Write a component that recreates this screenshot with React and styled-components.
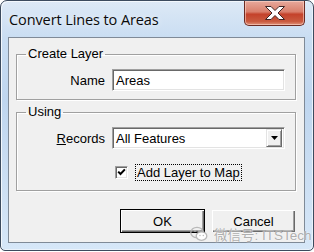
import React from 'react';
import styled, { createGlobalStyle } from 'styled-components';

function App() {
  return (
    <>
      <GlobalStyle />
      <Window>
        <TitleBar>
          <Title>Convert Lines to Areas</Title>
          <CloseButton aria-label='Close'>
            <svg width='22' height='16' viewBox='0 0 22 16'>
              <path
                d='M1.5 1.5h5.5l4 4 4-4h5.5l-6.5 6.5 6.5 6.5h-5.5l-4-4-4 4h-5.5l6.5-6.5z'
                fill='#fff'
                stroke='#3d2424'
                strokeWidth='1'
                strokeLinejoin='round'
              />
            </svg>
          </CloseButton>
        </TitleBar>
        <Client>
          <Group>
            <Legend>Create Layer</Legend>
            <FieldGrid>
              <Label>Name</Label>
              <TextBox>Areas</TextBox>
            </FieldGrid>
          </Group>
          <Group $top={4} $bottom={10}>
            <Legend>Using</Legend>
            <FieldGrid>
              <Label>
                <u>R</u>ecords
              </Label>
              <Combo>
                <ComboText>All Features</ComboText>
                <ComboButton>
                  <svg width='7' height='4' viewBox='0 0 7 4'>
                    <path d='M0 0h7L3.5 4z' fill='#000' />
                  </svg>
                </ComboButton>
              </Combo>
              <span />
              <CheckRow>
                <CheckBox>
                  <svg width='9' height='9' viewBox='0 0 9 9'>
                    <path
                      d='M1.2 3.6L3.5 6l4.4-4.6'
                      fill='none'
                      stroke='#000'
                      strokeWidth='2'
                    />
                  </svg>
                </CheckBox>
                <FocusLabel>Add Layer to Map</FocusLabel>
              </CheckRow>
            </FieldGrid>
          </Group>
          <ButtonRow>
            <Button $default>OK</Button>
            <Button>Cancel</Button>
          </ButtonRow>
        </Client>
        <Watermark>
          <svg width='18' height='16' viewBox='0 0 18 16'>
            <ellipse cx='7' cy='6.5' rx='6.2' ry='5.2' fill='none' stroke='#b4b4b4' strokeWidth='1.3' />
            <ellipse cx='11.5' cy='10' rx='5.3' ry='4.3' fill='#fff' stroke='#b4b4b4' strokeWidth='1.3' />
            <circle cx='5' cy='5' r='0.9' fill='#b4b4b4' />
            <circle cx='9' cy='5' r='0.9' fill='#b4b4b4' />
            <circle cx='10' cy='9.5' r='0.7' fill='#b4b4b4' />
            <circle cx='13.3' cy='9.5' r='0.7' fill='#b4b4b4' />
          </svg>
          <WatermarkText>微信号: ITSTech</WatermarkText>
        </Watermark>
      </Window>
    </>
  );
}

export default App;

const GlobalStyle = createGlobalStyle`
  body {
    margin: 0;
    background: #ffffff;
    font-family: 'Liberation Sans', Arial, sans-serif;
  }
`;

const Window = styled.div`
  position: relative;
  box-sizing: border-box;
  width: 314px;
  height: 251px;
  display: flex;
  flex-direction: column;
  border: 1px solid #3c4b5e;
  border-radius: 7px 7px 5px 5px;
  background: linear-gradient(
    180deg,
    #dde9f6 0%,
    #c9ddf2 15%,
    #bfd6ef 40%,
    #cfe1f4 80%,
    #d6e7f8 100%
  );
  box-shadow: inset 1px 1px 0 #f3f8fd, inset -1px -1px 0 #eaf2fb;
  overflow: hidden;
`;

const TitleBar = styled.div`
  display: flex;
  align-items: flex-start;
  height: 36px;
  padding-left: 8px;
`;

const Title = styled.div`
  margin-top: 9px;
  font-family: 'Open Sans', 'Noto Sans', sans-serif;
  font-size: 14.5px;
  color: #0b0b0b;
  letter-spacing: -0.1px;
  text-shadow: 0 0 6px rgba(255, 255, 255, 0.9);
`;

const CloseButton = styled.div`
  box-sizing: border-box;
  margin-left: auto;
  margin-right: 8px;
  width: 61px;
  height: 25px;
  display: flex;
  align-items: center;
  justify-content: center;
  border: 1px solid #6b2a22;
  border-top: none;
  border-radius: 0 0 5px 5px;
  background: linear-gradient(
    180deg,
    #e7a99c 0%,
    #d97f6c 45%,
    #c4422b 55%,
    #c95a3f 85%,
    #e0927a 100%
  );
  box-shadow: inset 0 0 0 1px rgba(255, 220, 210, 0.55);
`;

const Client = styled.div`
  flex: 1;
  margin: 0 8px 7px 7px;
  padding: 8px 8px 0 7px;
  border: 1px solid #7f8a97;
  background: #f0f0f0;
`;

const Group = styled.fieldset`
  margin: ${(p) => p.$top || 0}px 0 0 0;
  padding: 7px 10px ${(p) => p.$bottom ?? 8}px 0;
  min-width: 0;
  border: 1px solid #a0a0a0;
  box-shadow: inset 1px 1px 0 #ffffff, 1px 1px 0 #ffffff;
`;

const Legend = styled.legend`
  margin-left: 9px;
  padding: 0 2px;
  font-size: 13px;
  line-height: 16px;
  color: #000;
`;

const FieldGrid = styled.div`
  display: grid;
  grid-template-columns: 1fr 173px;
  column-gap: 7px;
  row-gap: 16px;
  align-items: center;
`;

const Label = styled.div`
  text-align: right;
  font-size: 13px;
  color: #000;
`;

const TextBox = styled.div`
  box-sizing: border-box;
  height: 22px;
  padding: 0 3px;
  display: flex;
  align-items: center;
  font-size: 13px;
  color: #000;
  background: #ffffff;
  border-top: 1px solid #a0a0a0;
  border-left: 1px solid #a0a0a0;
  border-right: 1px solid #ffffff;
  border-bottom: 1px solid #ffffff;
  box-shadow: inset 1px 1px 0 #696969, inset -1px -1px 0 #e3e3e3;
`;

const Combo = styled(TextBox)`
  padding: 0 2px 0 3px;
  justify-content: space-between;
`;

const ComboText = styled.span``;

const ComboButton = styled.div`
  box-sizing: border-box;
  width: 16px;
  height: 18px;
  display: flex;
  align-items: center;
  justify-content: center;
  background: #f0f0f0;
  border-top: 1px solid #e3e3e3;
  border-left: 1px solid #e3e3e3;
  border-right: 1px solid #696969;
  border-bottom: 1px solid #696969;
  box-shadow: inset 1px 1px 0 #ffffff, inset -1px -1px 0 #a0a0a0;
`;

const CheckRow = styled.div`
  display: flex;
  align-items: center;
  gap: 8px;
  padding-left: 3px;
`;

const CheckBox = styled.div`
  box-sizing: border-box;
  width: 13px;
  height: 13px;
  display: flex;
  align-items: center;
  justify-content: center;
  background: #ffffff;
  border-top: 1px solid #a0a0a0;
  border-left: 1px solid #a0a0a0;
  border-right: 1px solid #ffffff;
  border-bottom: 1px solid #ffffff;
  box-shadow: inset 1px 1px 0 #696969, inset -1px -1px 0 #e3e3e3;
`;

const FocusLabel = styled.span`
  padding: 0 1px;
  font-size: 13px;
  line-height: 15px;
  color: #000;
  outline: 1px dotted #000;
`;

const ButtonRow = styled.div`
  display: flex;
  justify-content: flex-end;
  gap: 6px;
  margin-top: 18px;
`;

const Button = styled.div`
  box-sizing: border-box;
  width: 85px;
  height: 24px;
  display: flex;
  align-items: center;
  justify-content: center;
  font-size: 13px;
  color: #000;
  background: #f0f0f0;
  border: 1px solid ${(p) => (p.$default ? '#000' : '#f0f0f0')};
  box-shadow: inset 1px 1px 0 #ffffff, inset -1px -1px 0 #696969,
    inset -2px -2px 0 #a0a0a0;
`;

const Watermark = styled.div`
  position: absolute;
  left: 189px;
  top: 223px;
  display: flex;
  align-items: center;
  gap: 6px;
  opacity: 0.9;
`;

const WatermarkText = styled.span`
  font-family: 'Liberation Sans', 'Noto Sans CJK SC', sans-serif;
  font-size: 13.5px;
  color: #a8a8a8;
  text-shadow: 0 0 2px #ffffff, 0 0 1px #ffffff;
`;
